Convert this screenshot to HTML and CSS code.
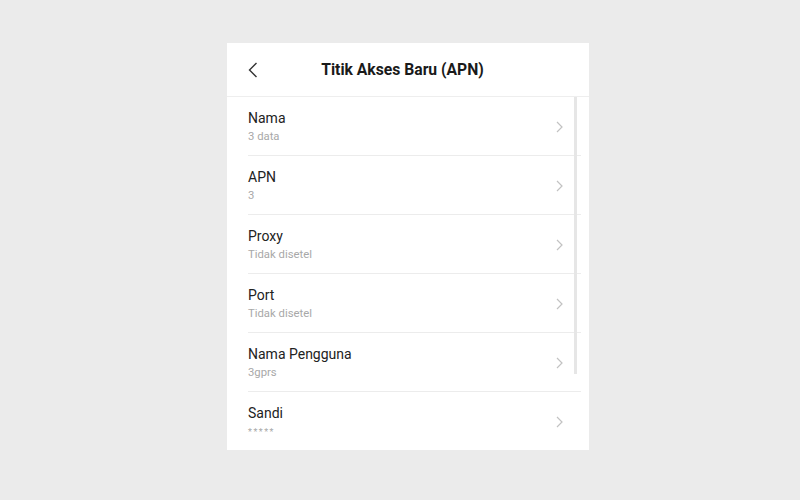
FILE: index.html
```html
<!DOCTYPE html>
<html lang="id">
<head>
  <meta charset="UTF-8">
  <title>Titik Akses Baru (APN)</title>
  <link rel="stylesheet" href="styles.css">
</head>
<body>

  <div class="phone">
    <div class="header">
      <button type="button" class="back">
        <svg width="10" height="16" viewBox="0 0 10 16"><polyline points="8.5,1 1.5,8 8.5,15" fill="none" stroke="#333" stroke-width="1.4"/></svg>
      </button>
      <h1 class="title">Titik Akses Baru (APN)</h1>
      <span></span>
    </div>

    <div class="list">
      <div class="scrollbar"></div>

      <div class="row">
        <div class="text">
          <div class="label">Nama</div>
          <div class="value">3 data</div>
        </div>
        <svg class="chev" width="7" height="12" viewBox="0 0 7 12"><polyline points="1,1 6,6 1,11" fill="none" stroke="#c2c2c2" stroke-width="1.2"/></svg>
      </div>

      <div class="row">
        <div class="text">
          <div class="label">APN</div>
          <div class="value">3</div>
        </div>
        <svg class="chev" width="7" height="12" viewBox="0 0 7 12"><polyline points="1,1 6,6 1,11" fill="none" stroke="#c2c2c2" stroke-width="1.2"/></svg>
      </div>

      <div class="row">
        <div class="text">
          <div class="label">Proxy</div>
          <div class="value">Tidak disetel</div>
        </div>
        <svg class="chev" width="7" height="12" viewBox="0 0 7 12"><polyline points="1,1 6,6 1,11" fill="none" stroke="#c2c2c2" stroke-width="1.2"/></svg>
      </div>

      <div class="row">
        <div class="text">
          <div class="label">Port</div>
          <div class="value">Tidak disetel</div>
        </div>
        <svg class="chev" width="7" height="12" viewBox="0 0 7 12"><polyline points="1,1 6,6 1,11" fill="none" stroke="#c2c2c2" stroke-width="1.2"/></svg>
      </div>

      <div class="row">
        <div class="text">
          <div class="label">Nama Pengguna</div>
          <div class="value">3gprs</div>
        </div>
        <svg class="chev" width="7" height="12" viewBox="0 0 7 12"><polyline points="1,1 6,6 1,11" fill="none" stroke="#c2c2c2" stroke-width="1.2"/></svg>
      </div>

      <div class="row">
        <div class="text">
          <div class="label">Sandi</div>
          <div class="value stars">*****</div>
        </div>
        <svg class="chev" width="7" height="12" viewBox="0 0 7 12"><polyline points="1,1 6,6 1,11" fill="none" stroke="#c2c2c2" stroke-width="1.2"/></svg>
      </div>
    </div>
  </div>

</body>
</html>
```

FILE: styles.css
```css
body {
  font-family: Roboto, "Noto Sans", Arial, sans-serif;
  margin: 0;
  background-color: #ebebeb;
}
.phone {
  width: 362px;
  margin: 43px 0 0 227px;
  background-color: white;
}
.header {
  display: grid;
  grid-template-columns: 1fr auto 1fr;
  align-items: center;
  height: 53px;
  padding: 0 32px 0 21px;
  border-bottom: 1px solid #eeeeee;
}
.back {
  justify-self: start;
  display: flex;
  padding: 0;
  background: none;
  border: none;
  cursor: pointer;
}
.title {
  margin: 0;
  font-size: 15.7px;
  font-weight: bold;
  color: #1a1a1a;
}
.list {
  position: relative;
  height: 353px;
  overflow: hidden;
}
.scrollbar {
  position: absolute;
  top: 0;
  right: 12px;
  width: 3px;
  height: 277px;
  background-color: #e6e6e6;
}
.row {
  display: flex;
  align-items: center;
  justify-content: space-between;
  margin: 0 8px 0 21px;
  padding: 12px 18px 11px 0;
  border-bottom: 1px solid #ececec;
}
.row:last-child {
  border-bottom: none;
}
.label {
  font-size: 14px;
  line-height: 18px;
  color: #222;
}
.value {
  margin-top: 3px;
  font-size: 11.3px;
  line-height: 14px;
  color: #a8a8a8;
}
.stars {
  font-size: 9px;
  letter-spacing: 1.5px;
}
.chev {
  display: block;
}
```
